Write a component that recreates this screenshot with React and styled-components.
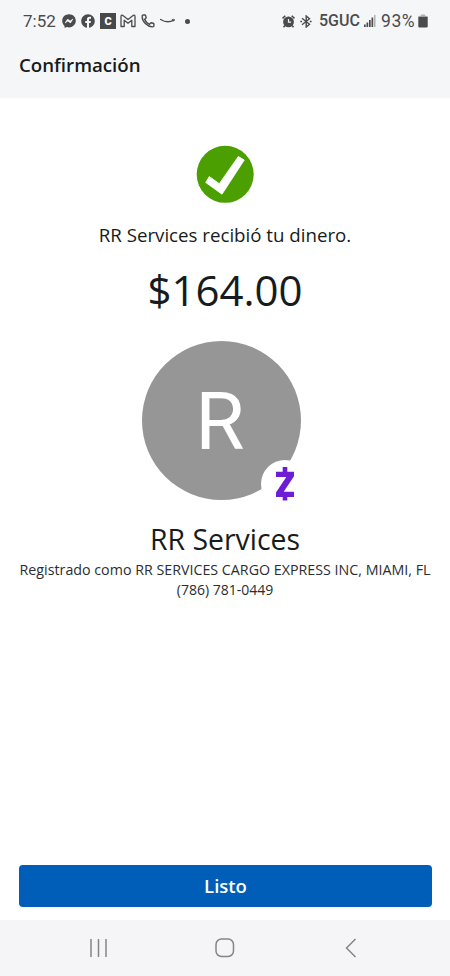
import styled, { createGlobalStyle } from "styled-components";
import { FaFacebookMessenger, FaFacebook } from "react-icons/fa";

const GlobalStyle = createGlobalStyle`
  * {
    box-sizing: border-box;
  }
  body {
    margin: 0;
    background-color: #fff;
  }
`;

const Screen = styled.div`
  display: flex;
  flex-direction: column;
  width: 450px;
  height: 976px;
  overflow: hidden;
  background-color: #fff;
  color: #161b20;
  font-family: "Open Sans", sans-serif;
`;

const TopArea = styled.header`
  height: 98px;
  background-color: #f5f6f8;
`;

const StatusBar = styled.div`
  display: flex;
  justify-content: space-between;
  height: 42px;
  padding: 0 22px 0 23px;
  color: #4a4b4d;
  font-family: Roboto, sans-serif;
`;

const StatusGroup = styled.div`
  display: flex;
  align-items: center;
`;

const StatusText = styled.span`
  font-size: ${(props) => props.$size || 17}px;
  font-weight: ${(props) => props.$weight || 400};
  letter-spacing: ${(props) => props.$spacing || 0}px;
  line-height: ${(props) => props.$line || 20}px;
  white-space: nowrap;
  width: ${(props) => props.$width}px;
  margin-right: ${(props) => props.$gap || 0}px;
`;

const StatusIcon = styled.span`
  display: flex;
  flex: none;
  width: ${(props) => props.$width}px;
  margin-right: ${(props) => props.$gap || 0}px;

  svg {
    display: block;
  }
`;

const AppBadge = styled.span`
  display: flex;
  align-items: center;
  justify-content: center;
  width: 16px;
  height: 16px;
  margin-right: 4px;
  background-color: #48494b;
  color: #fff;
  font-size: 11px;
  font-weight: 900;
`;

const Dot = styled.span`
  width: 5px;
  height: 5px;
  border-radius: 50%;
  background-color: #4a4b4d;
`;

const Title = styled.h1`
  margin: 0;
  padding: 10px 0 0 19px;
  font-size: 18.7px;
  font-weight: 600;
  line-height: 26px;
`;

const Content = styled.main`
  display: flex;
  flex: 1;
  flex-direction: column;
  align-items: center;
  padding-top: 47px;
`;

const Message = styled.p`
  margin: 19px 0 0;
  font-size: 18.7px;
  line-height: 26px;
`;

const Amount = styled.p`
  margin: 14px 0 0;
  font-size: 42px;
  line-height: 56px;
`;

const Avatar = styled.div`
  position: relative;
  display: flex;
  align-items: center;
  justify-content: center;
  width: 159px;
  height: 159px;
  margin: 23px 8px 0 0;
  padding: 2px 2px 0 0;
  border-radius: 50%;
  background-color: #969696;
  color: #fff;
  font-family: Roboto, sans-serif;
  font-size: 80px;
`;

const ZelleBadge = styled.div`
  position: absolute;
  right: -8px;
  bottom: -8px;
  display: flex;
  align-items: center;
  justify-content: center;
  width: 48px;
  height: 48px;
  border-radius: 50%;
  background-color: #fff;
`;

const Name = styled.h2`
  margin: 19px 0 1px;
  font-size: 28.4px;
  font-weight: 400;
  line-height: 40px;
`;

const Detail = styled.p`
  margin: 0;
  color: #2a2d31;
  font-size: ${(props) => props.$size || 14}px;
  line-height: 20px;
  white-space: nowrap;
`;

const DoneButton = styled.button`
  height: 42px;
  margin: 0 18px 13px 19px;
  padding-bottom: 3px;
  border: 0;
  border-radius: 4px;
  background-color: #005eb8;
  color: #fff;
  font-family: inherit;
  font-size: 18.5px;
  font-weight: 600;
`;

const NavBar = styled.nav`
  display: grid;
  grid-template-columns: 126px 130px 12px;
  align-items: center;
  height: 56px;
  padding-left: 89px;
  background-color: #f5f5f7;
`;

const GmailIcon = () => (
  <svg width="16" height="14" viewBox="0 0 16 14" fill="none" stroke="currentColor" strokeWidth="1.3" strokeLinejoin="round">
    <path d="M1 12.5V2.5Q1 .8 2.6 1.3L8 5.5l5.4-4.2Q15 .8 15 2.5v10h-3.2V6.2L8 9.2l-3.8-3v6.3Z" />
  </svg>
);

const PhoneIcon = () => (
  <svg width="14" height="14" viewBox="0 0 14 14" fill="none" stroke="currentColor" strokeWidth="1.4" strokeLinejoin="round">
    <path d="M1.2 2.4Q1.1 1 2.5 1h1.3q.7 0 .9.8l.5 2-1.6 1.6q1.5 3.3 4.8 4.9L10 8.7l2.1.5q.8.2.8.9v1.4q0 1.5-1.5 1.4Q7.5 12.7 4.3 9.5T1.2 2.4Z" />
  </svg>
);

const SmileIcon = () => (
  <svg width="16" height="8" viewBox="0 0 16 8" fill="none" stroke="currentColor" strokeLinecap="round">
    <path d="M.7 2.5Q7 6.6 13.5 3.4" strokeWidth="1.4" />
    <path d="M12.2 2.5q2-.5 2.3 0t-.5 1.5" strokeWidth=".9" />
  </svg>
);

const AlarmIcon = () => (
  <svg width="13" height="13" viewBox="0 0 13 13">
    <path d="M.5 3.4 3.3.8M12.5 3.4 9.7.8M3 10.5 1.500 12.300M10 10.500l1.500 1.800" stroke="currentColor" strokeWidth="1.5" />
    <circle cx="6.5" cy="6.9" r="5.4" fill="currentColor" />
    <path d="M6.5 4v3.2h2.6" fill="none" stroke="#f5f6f8" strokeWidth="1.2" />
  </svg>
);

const BluetoothIcon = () => (
  <svg width="12" height="13" viewBox="0 0 12 13" fill="none" stroke="currentColor" strokeWidth="1.4">
    <path d="m2 3.2 7.500 6L6.200 12V1l3.300 2.800L2 9.800" />
    <path d="M.3 6.500h1.800M9.800 6.500h1.800" strokeWidth="1.7" />
  </svg>
);

const SignalIcon = () => (
  <svg width="12" height="13" viewBox="0 0 12 13" fill="currentColor">
    <path d="M0 9.500h1.700V12H0zM2.500 7.500h1.700V12H2.500zM5 5h1.700v7H5zM7.500 2.500h1.700V12H7.500z" />
    <path d="M10 0h1.500v12H10z" opacity=".4" />
  </svg>
);

const BatteryIcon = () => (
  <svg width="10" height="14" viewBox="0 0 10 14" fill="currentColor">
    <path d="M3 .5h4v1.300h1.500q1 0 1 1H.5q0-1 1-1H3z" opacity=".4" />
    <path d="M.3 2.800h9.400v9.400q0 1.300-1.300 1.300H1.600Q.3 13.500.3 12.200z" />
  </svg>
);

const CheckIcon = () => (
  <svg width="58" height="58" viewBox="0 0 58 58">
    <circle cx="29.2" cy="29.3" r="28.5" fill="#4b9f00" />
    <path
      d="M9.700 37.500 13.300 31.500l10 7.200L42.300 11.500l6 3.500L26 49.200Z"
      fill="#fff"
      stroke="#fff"
      strokeWidth=".8"
      strokeLinejoin="round"
    />
  </svg>
);

const ZelleIcon = () => (
  <svg width="20" height="34" viewBox="0 0 20 34" fill="#6d1ed4">
    <path d="M1 4.700h18v4.500L8.700 24.700H19V30H1v-4.500L11.300 10H1z" />
    <path d="M7.700 0h4.600v5H7.700zM7.700 29.500h4.600v4H7.700z" />
  </svg>
);

const RecentsIcon = () => (
  <svg width="20" height="20" viewBox="0 0 20 20" stroke="#858589" strokeWidth="1.5">
    <path d="M2 1v18M9.500 1v18M17 1v18" />
  </svg>
);

const HomeIcon = () => (
  <svg width="20" height="20" viewBox="0 0 20 20" fill="none" stroke="#858589" strokeWidth="1.5">
    <rect x="1" y="1" width="17.5" height="17.5" rx="5.5" />
  </svg>
);

const BackIcon = () => (
  <svg width="12" height="20" viewBox="0 0 12 20" fill="none" stroke="#858589" strokeWidth="1.5">
    <path d="M10.500 1 1.500 10l9 9" />
  </svg>
);

const App = () => {
  return (
    <>
      <GlobalStyle />
      <Screen>
        <TopArea>
          <StatusBar>
            <StatusGroup>
              <StatusText $width={32} $gap={7}>7:52</StatusText>
              <StatusIcon $width={14} $gap={5}>
                <FaFacebookMessenger size={14} />
              </StatusIcon>
              <StatusIcon $width={14} $gap={5}>
                <FaFacebook size={14} />
              </StatusIcon>
              <AppBadge>C</AppBadge>
              <StatusIcon $width={16} $gap={5}>
                <GmailIcon />
              </StatusIcon>
              <StatusIcon $width={14} $gap={5}>
                <PhoneIcon />
              </StatusIcon>
              <StatusIcon $width={16} $gap={9}>
                <SmileIcon />
              </StatusIcon>
              <Dot />
            </StatusGroup>
            <StatusGroup>
              <StatusIcon $width={13} $gap={5}>
                <AlarmIcon />
              </StatusIcon>
              <StatusIcon $width={12} $gap={7}>
                <BluetoothIcon />
              </StatusIcon>
              <StatusText $size={16} $weight={500} $line={22} $width={40} $gap={5}>5GUC</StatusText>
              <StatusIcon $width={12} $gap={5}>
                <SignalIcon />
              </StatusIcon>
              <StatusText $size={17.5} $spacing={0.6} $width={35} $gap={2}>93%</StatusText>
              <StatusIcon $width={10}>
                <BatteryIcon />
              </StatusIcon>
            </StatusGroup>
          </StatusBar>
          <Title>Confirmación</Title>
        </TopArea>
        <Content>
          <CheckIcon />
          <Message>RR Services recibió tu dinero.</Message>
          <Amount>$164.00</Amount>
          <Avatar>
            R
            <ZelleBadge>
              <ZelleIcon />
            </ZelleBadge>
          </Avatar>
          <Name>RR Services</Name>
          <Detail $size={14.25}>Registrado como RR SERVICES CARGO EXPRESS INC, MIAMI, FL</Detail>
          <Detail>(786) 781-0449</Detail>
        </Content>
        <DoneButton>Listo</DoneButton>
        <NavBar>
          <RecentsIcon />
          <HomeIcon />
          <BackIcon />
        </NavBar>
      </Screen>
    </>
  );
};

export default App;
